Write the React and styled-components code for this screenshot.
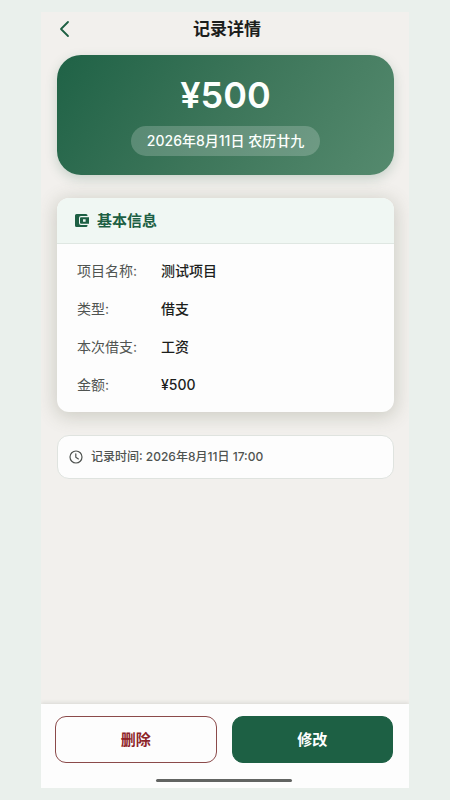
import React from "react";
import styled, { createGlobalStyle } from "styled-components";

const GlobalStyle = createGlobalStyle`
  * { box-sizing: border-box; }
  body {
    margin: 0;
    background: #eaf0ec;
    font-family: Inter, "Noto Sans CJK SC", sans-serif;
    color: #1c1e1c;
  }
  button { font-family: inherit; cursor: pointer; }
`;

const Page = styled.div`
  min-height: 100vh;
  padding: 12px 41px;
  display: flex;
`;

const Screen = styled.div`
  flex: 1;
  min-width: 0;
  display: flex;
  flex-direction: column;
  overflow: hidden;
  background: #f2f0ed;
`;

const TopBar = styled.header`
  display: grid;
  grid-template-columns: 32px 1fr 28px;
  align-items: center;
  height: 34px;
  padding: 0 8px;
`;

const BackButton = styled.button`
  display: flex;
  align-items: center;
  justify-content: center;
  width: 32px;
  height: 32px;
  padding: 0;
  border: 0;
  background: none;
  color: #1d5f43;
`;

const Title = styled.h1`
  margin: 0;
  font-size: 17px;
  line-height: 24px;
  font-weight: 600;
  text-align: center;
`;

const Content = styled.main`
  flex: 1;
  display: flex;
  flex-direction: column;
  gap: 23px;
  padding: 9px 15px 24px 16px;
`;

const Summary = styled.section`
  display: flex;
  flex-direction: column;
  align-items: center;
  gap: 9px;
  padding: 18px 16px 19px;
  border-radius: 24px;
  background: linear-gradient(125deg, #1f6246 0%, #3d765a 50%, #558a6e 100%);
  box-shadow: 0 4px 12px rgba(45, 100, 75, 0.22);
  color: #fcfffd;
`;

const Amount = styled.div`
  font-size: 36px;
  line-height: 44px;
  font-weight: 600;
`;

const DatePill = styled.div`
  padding: 4px 16px;
  border-radius: 16px;
  background: rgba(255, 255, 255, 0.2);
  font-size: 14px;
  line-height: 22px;
  font-weight: 500;
  white-space: nowrap;
`;

const InfoCard = styled.section`
  border-radius: 12px;
  background: #fdfdfd;
  box-shadow: 0 3px 18px 2px rgba(90, 98, 70, 0.24);
`;

const CardHeader = styled.header`
  display: flex;
  align-items: center;
  gap: 7px;
  height: 46px;
  padding: 0 16px;
  border-bottom: 1px solid #dfe7e2;
  border-radius: 12px 12px 0 0;
  background: #f0f7f3;
  color: #1d5f43;
`;

const CardTitle = styled.h2`
  margin: 0;
  font-size: 15px;
  line-height: 22px;
  font-weight: 600;
`;

const Fields = styled.dl`
  display: grid;
  grid-template-columns: 84px 1fr;
  row-gap: 16px;
  margin: 0;
  padding: 16px 20px;
  font-size: 14px;
  line-height: 22px;
`;

const FieldName = styled.dt`
  color: #505451;
`;

const FieldValue = styled.dd`
  margin: 0;
  font-weight: 500;
`;

const RecordTime = styled.div`
  display: flex;
  align-items: center;
  gap: 8px;
  padding: 10px 11px;
  border: 1px solid #dfe3df;
  border-radius: 12px;
  background: #fdfdfd;
  color: #4f5350;
  font-size: 12px;
  line-height: 22px;
  font-weight: 500;
`;

const ActionBar = styled.footer`
  display: flex;
  flex-direction: column;
  align-items: center;
  gap: 16px;
  padding: 12px 16px 6px 14px;
  background: #fdfdfd;
  box-shadow: 0 -1px 4px rgba(60, 70, 55, 0.14);
`;

const Actions = styled.div`
  display: grid;
  grid-template-columns: 1fr 1fr;
  gap: 15px;
  width: 100%;
`;

const ActionButton = styled.button`
  height: 47px;
  padding: 0;
  border: 1px solid ${(p) => (p.$primary ? "#1d6044" : "#8b4a4a")};
  border-radius: 11px;
  background: ${(p) => (p.$primary ? "#1d6044" : "transparent")};
  color: ${(p) => (p.$primary ? "#ffffff" : "#8e2529")};
  font-size: 15px;
  line-height: 22px;
  font-weight: 600;
`;

const HomeIndicator = styled.div`
  width: 136px;
  height: 3px;
  border-radius: 2px;
  background: #626462;
`;

const BackIcon = () => (
  <svg width="18" height="18" viewBox="0 0 18 18" fill="none" stroke="currentColor" strokeWidth="1.8" strokeLinecap="round" strokeLinejoin="round" aria-hidden="true">
    <path d="M12 2 5 9l7 7" />
  </svg>
);

const WalletIcon = () => (
  <svg width="17" height="17" viewBox="0 0 17 17" fill="currentColor" aria-hidden="true">
    <path d="M3.500 2H13a1.500 1.500 0 0 1 1.500 1.500V4H8a2 2 0 0 0-2 2v5a2 2 0 0 0 2 2h6.500v.500A1.500 1.500 0 0 1 13 15H3.500A1.500 1.500 0 0 1 2 13.500v-10A1.500 1.500 0 0 1 3.500 2Z" />
    <path fillRule="evenodd" d="M8 5.200h8v6.600H8a1 1 0 0 1-1-1V6.200a1 1 0 0 1 1-1Zm2 2v2.600h2.600V7.200H10Z" />
  </svg>
);

const ClockIcon = () => (
  <svg width="14" height="14" viewBox="0 0 14 14" fill="none" stroke="currentColor" strokeWidth="1.2" strokeLinecap="round" strokeLinejoin="round" aria-hidden="true">
    <circle cx="7" cy="7" r="6" />
    <path d="M6.800 3.800v3.500l2.600 1.600" />
  </svg>
);

const fields = [
  ["项目名称:", "测试项目"],
  ["类型:", "借支"],
  ["本次借支:", "工资"],
  ["金额:", "¥500"],
];

export default function App() {
  return (
    <>
      <GlobalStyle />
      <Page lang="zh-CN">
        <Screen>
          <TopBar>
            <BackButton type="button" aria-label="返回">
              <BackIcon />
            </BackButton>
            <Title>记录详情</Title>
          </TopBar>
          <Content>
            <Summary>
              <Amount>¥500</Amount>
              <DatePill>2026年8月11日 农历廿九</DatePill>
            </Summary>
            <InfoCard>
              <CardHeader>
                <WalletIcon />
                <CardTitle>基本信息</CardTitle>
              </CardHeader>
              <Fields>
                {fields.map(([name, value]) => (
                  <React.Fragment key={name}>
                    <FieldName>{name}</FieldName>
                    <FieldValue>{value}</FieldValue>
                  </React.Fragment>
                ))}
              </Fields>
            </InfoCard>
            <RecordTime>
              <ClockIcon />
              <span>记录时间: 2026年8月11日 17:00</span>
            </RecordTime>
          </Content>
          <ActionBar>
            <Actions>
              <ActionButton type="button">删除</ActionButton>
              <ActionButton type="button" $primary>修改</ActionButton>
            </Actions>
            <HomeIndicator />
          </ActionBar>
        </Screen>
      </Page>
    </>
  );
}
